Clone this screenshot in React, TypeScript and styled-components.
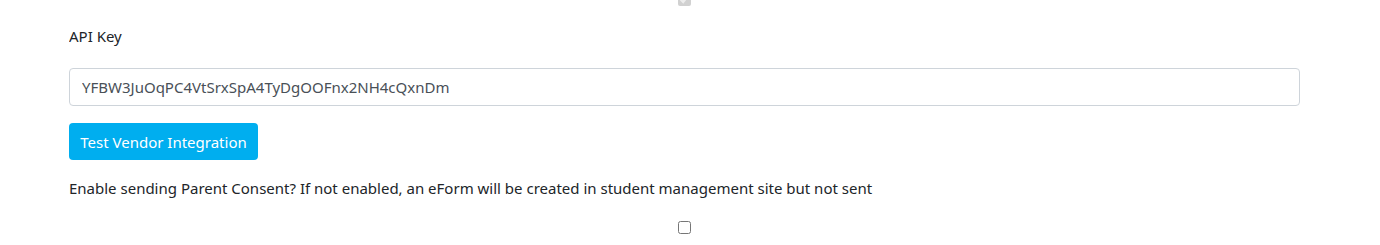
import React from 'react';
import styled, { createGlobalStyle } from 'styled-components';

const GlobalStyle = createGlobalStyle`
  body {
    margin: 0;
    background: #ffffff;
    font-family: "Noto Sans", "Open Sans", sans-serif;
    color: #212529;
  }
`;

const Page = styled.div`
  width: 1231px;
  margin-left: 69px;
  height: 245px;
  overflow: hidden;
`;

const CenterCheck = styled.div<{ $top: number }>`
  display: flex;
  justify-content: center;
  margin-top: ${p => p.$top}px;
  height: 13px;

  input {
    margin: 0;
    width: 13px;
    height: 13px;
  }
`;

const Label = styled.div`
  margin-top: 19px;
  font-size: 15px;
  line-height: 22px;
`;

const KeyInput = styled.input`
  display: block;
  box-sizing: border-box;
  width: 100%;
  height: 38px;
  margin-top: 21px;
  padding: 0 12px;
  border: 1px solid #ced4da;
  border-radius: 4px;
  font-family: inherit;
  font-size: 15px;
  color: #495057;
  background: #fff;
`;

const Button = styled.button`
  display: block;
  box-sizing: border-box;
  margin-top: 17px;
  height: 37px;
  width: 189px;
  padding: 0;
  border: none;
  border-radius: 4px;
  background: #00aeef;
  color: #ffffff;
  font-family: inherit;
  font-size: 15px;
  white-space: nowrap;
`;

const Note = styled.p`
  margin: 17px 0 0;
  font-size: 15px;
  line-height: 22px;
`;

export default function App() {
  return (
    <>
      <GlobalStyle />
      <Page>
        <CenterCheck $top={-7}>
          <input type="checkbox" checked disabled readOnly />
        </CenterCheck>
        <Label>API Key</Label>
        <KeyInput readOnly value="YFBW3JuOqPC4VtSrxSpA4TyDgOOFnx2NH4cQxnDm" />
        <Button>Test Vendor Integration</Button>
        <Note>
          Enable sending Parent Consent? If not enabled, an eForm will be created in student management site but not sent
        </Note>
        <CenterCheck $top={22}>
          <input type="checkbox" readOnly />
        </CenterCheck>
      </Page>
    </>
  );
}
